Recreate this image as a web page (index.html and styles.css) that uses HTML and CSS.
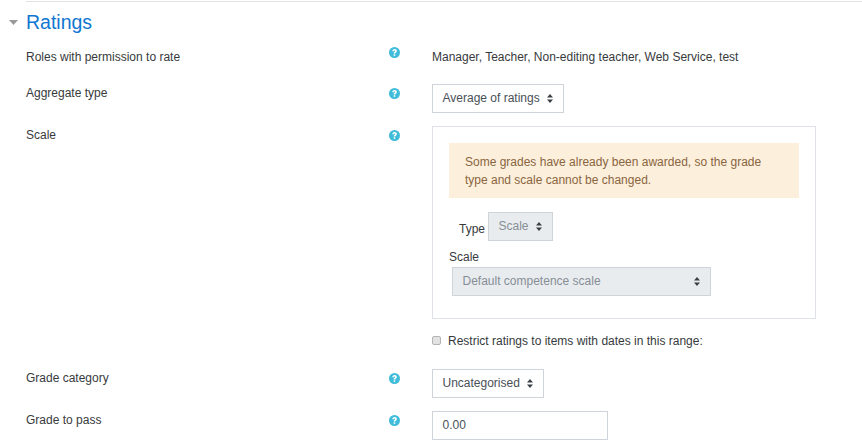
FILE: index.html
```html
<!DOCTYPE html>
<html lang="en">
<head>
<meta charset="utf-8">
<title>Ratings</title>
<link rel="stylesheet" href="styles.css">
</head>
<body>
<svg width="0" height="0" class="defs">
  <symbol id="help" viewBox="0 0 12 12">
    <circle cx="6" cy="6" r="6" fill="#3fbcd9"/>
    <path d="M3.6 4.6C3.7 3.2 4.8 2.3 6.1 2.3c1.5 0 2.5.9 2.5 2.1 0 1-.6 1.4-1.2 1.8-.4.3-.6.5-.6 1H5.1c0-1 .3-1.4 1-1.9.4-.3.7-.5.7-.9s-.3-.7-.8-.7c-.5 0-.8.3-.9.8z" fill="#fff"/>
    <rect x="5.1" y="7.9" width="1.7" height="1.7" fill="#fff"/>
  </symbol>
  <symbol id="updown" viewBox="0 0 6 9">
    <path d="M3 0 6 3.4H0zM3 9 0 5.6h6z" fill="#3a3f45"/>
  </symbol>
</svg>
<main class="page">
  <header class="section-head">
    <svg class="caret" width="9" height="5" viewBox="0 0 9 5"><path d="M0 0h9L4.5 5z" fill="#999"/></svg>
    <h2 class="section-title">Ratings</h2>
  </header>

  <div class="row row-roles">
    <div class="label">Roles with permission to rate</div>
    <svg class="help"><use href="#help"/></svg>
    <div class="field static">Manager, Teacher, Non-editing teacher, Web Service, test</div>
  </div>

  <div class="row row-aggregate">
    <div class="label">Aggregate type</div>
    <svg class="help"><use href="#help"/></svg>
    <div class="field">
      <div class="select sel-aggregate"><span>Average of ratings</span><svg class="updown"><use href="#updown"/></svg></div>
    </div>
  </div>

  <div class="row row-scale">
    <div class="label">Scale</div>
    <svg class="help"><use href="#help"/></svg>
    <div class="field">
      <div class="scale-box">
        <div class="alert">Some grades have already been awarded, so the grade type and scale cannot be changed.</div>
        <div class="type-line">
          <span class="type-label">Type</span>
          <div class="select disabled sel-type"><span>Scale</span><svg class="updown"><use href="#updown"/></svg></div>
        </div>
        <div class="scale-label">Scale</div>
        <div class="select disabled sel-scale"><span>Default competence scale</span><svg class="updown"><use href="#updown"/></svg></div>
      </div>
    </div>
  </div>

  <div class="row row-restrict">
    <div class="field check-line">
      <span class="checkbox"></span>
      <span>Restrict ratings to items with dates in this range:</span>
    </div>
  </div>

  <div class="row row-category">
    <div class="label">Grade category</div>
    <svg class="help"><use href="#help"/></svg>
    <div class="field">
      <div class="select sel-category"><span>Uncategorised</span><svg class="updown"><use href="#updown"/></svg></div>
    </div>
  </div>

  <div class="row row-pass">
    <div class="label">Grade to pass</div>
    <svg class="help"><use href="#help"/></svg>
    <div class="field">
      <div class="input">0.00</div>
    </div>
  </div>
</main>
</body>
</html>
```
FILE: styles.css
```css
* { box-sizing: border-box; }
html, body { margin: 0; padding: 0; background: #fff; overflow: hidden; }
body {
  height: 447px;
  font-family: "Liberation Sans", Arial, sans-serif;
  font-size: 12px;
  line-height: 18px;
  color: #373a3c;
}
.defs { position: absolute; }
.page { padding-top: 1px; }
.section-head {
  display: flex;
  align-items: center;
  height: 41px;
  margin-left: 9px;
}
.section-head::before {
  content: "";
  position: absolute;
  left: 26px;
  right: 0;
  top: 1px;
  height: 1px;
  background: #e3e3e3;
}
.caret { margin-right: 8px; margin-top: 1px; }
.section-title {
  margin: 0;
  font-size: 19.5px;
  font-weight: 400;
  line-height: 24px;
  color: #1177d1;
}
.row { display: flex; align-items: flex-start; padding-left: 26px; }
.label { width: 363px; flex: none; }
.help { width: 11px; height: 11px; flex: none; margin-top: 4px; margin-right: 32px; }
.row-roles .help { margin-top: -1px; }
.field { flex: none; }

.row-roles { height: 42px; padding-top: 6px; }
.row-aggregate { height: 42px; }
.row-scale { height: 202px; }
.row-restrict { height: 41px; padding-left: 432px; }
.row-category { height: 42px; }
.row-pass { height: 36px; }

.select {
  display: inline-flex;
  align-items: center;
  justify-content: space-between;
  height: 29px;
  padding: 0 10px 0 9.5px;
  border: 1px solid #ced4da;
  color: #495057;
  background: #fff;
}
.select span { position: relative; top: -1px; }
.updown { width: 6px; height: 9px; flex: none; }
.disabled { background: #e9ecef; color: #868e96; }
.sel-aggregate { width: 132px; }
.sel-category { width: 112px; }
.sel-type { width: 65px; }
.sel-scale { width: 259px; margin-left: 3px; }

.scale-box {
  width: 384px;
  height: 193px;
  padding: 16px 16px 0;
  border: 1px solid #dee2e6;
}
.alert {
  width: 350px;
  height: 55px;
  padding: 10px 16px;
  background: #fcefdc;
  color: #8a6540;
}
.type-line { display: flex; align-items: center; margin-top: 14px; padding-left: 10px; height: 29px; }
.type-label { margin-right: 3px; position: relative; top: 2px; color: #373a3c; }
.scale-label { margin-top: 7px; height: 19px; }

.check-line { display: flex; align-items: center; height: 18px; margin-top: 4px; color: #373a3c; }
.checkbox {
  width: 9px;
  height: 9px;
  margin-right: 7px;
  margin-top: -2px;
  border: 1px solid #b4b4b4;
  border-radius: 2px;
  background: #e2e2e2;
}
.input {
  width: 176px;
  height: 29px;
  padding: 4px 9.5px;
  border: 1px solid #ced4da;
  color: #495057;
}
```
